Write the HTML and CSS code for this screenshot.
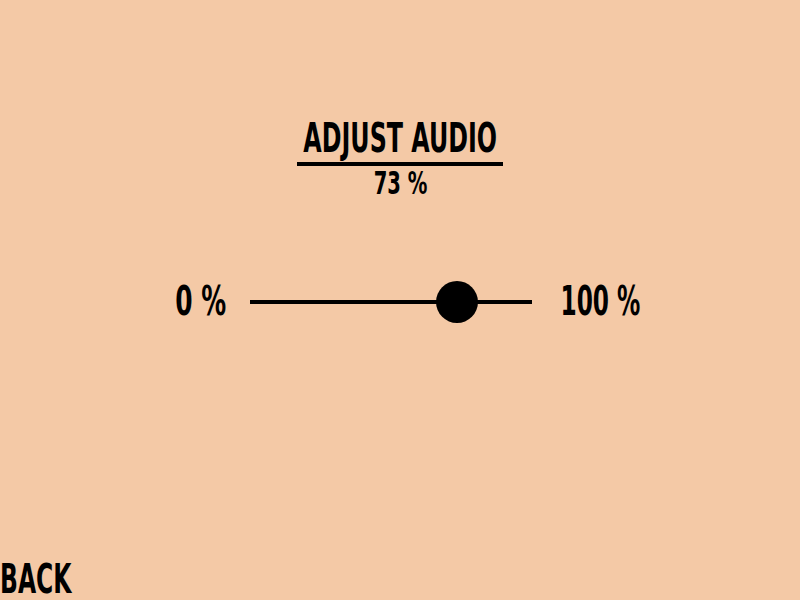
FILE: index.html
```html
<!DOCTYPE html>
<html lang="en">
<head>
  <meta charset="UTF-8" />
  <title>Adjust Audio</title>
  <link rel="stylesheet" href="styles.css">
</head>
<body>
  <div class="screen">
    <div class="header">
      <h1 class="title"><span class="squeeze">ADJUST AUDIO</span></h1>
      <div class="value"><span class="squeeze">73 %</span></div>
    </div>

    <div class="slider-row">
      <span class="label label-min"><span class="squeeze">0 %</span></span>
      <div class="track">
        <div class="knob" style="left: 73.4%"></div>
      </div>
      <span class="label label-max"><span class="squeeze">100 %</span></span>
    </div>

    <div class="back"><span class="squeeze">BACK</span></div>
  </div>
</body>
</html>
```

FILE: styles.css
```css
body {
  margin: 0;
  padding: 0;
  background-color: #f4c9a6;
  color: #000;
  font-family: "DejaVu Sans Condensed", "DejaVu Sans", sans-serif;
  font-weight: bold;
}
.screen {
  width: 800px;
  height: 600px;
  display: flex;
  flex-direction: column;
  align-items: center;
}
/* the font is narrower than anything installed, so squeeze it */
.squeeze {
  display: inline-block;
  flex: none;
  white-space: nowrap;
  transform: scaleX(0.645);
}
.header {
  margin-top: 115px;
  display: flex;
  flex-direction: column;
  align-items: center;
}
.title {
  margin: 0;
  width: 206px;
  display: flex;
  justify-content: center;
  font-size: 41px;
  line-height: 47px;
  border-bottom: 4px solid #000;
}
.value {
  width: 54px;
  display: flex;
  justify-content: center;
  font-size: 32px;
  line-height: 34px;
}
.value .squeeze {
  transform: scaleX(0.68);
}
.slider-row {
  margin-top: 81px;
  margin-left: 15px;
  display: flex;
  align-items: center;
}
.label {
  display: flex;
  justify-content: center;
  font-size: 41px;
  line-height: 41px;
}
.label-min {
  width: 51px;
  margin-right: 24px;
}
.label-min .squeeze {
  transform: scaleX(0.675);
}
.label-max {
  width: 80px;
  margin-left: 28px;
}
.label-max .squeeze {
  transform: scaleX(0.63);
}
.track {
  position: relative;
  width: 282px;
  height: 4px;
  background-color: #000;
}
.knob {
  position: absolute;
  top: -19px;
  width: 42px;
  height: 42px;
  margin-left: -21px;
  border-radius: 50%;
  background-color: #000;
}
.back {
  margin-top: auto;
  align-self: flex-start;
  font-size: 41px;
  line-height: 42px;
}
.back .squeeze {
  transform: scaleX(0.636);
  transform-origin: left center;
}
```
